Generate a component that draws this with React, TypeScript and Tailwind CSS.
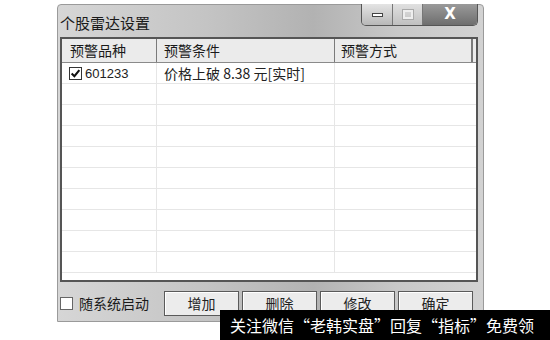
import React from "react";

const cjk = { fontFamily: '"Noto Sans CJK SC", "Noto Sans", sans-serif' };

function Row({ code, cond }: { code?: string; cond?: string }) {
    return (
        <div className="grid grid-cols-[95px_178px_1fr] h-[21px] border-b border-[#e6e6e6] shrink-0">
            <div className="border-r border-[#e6e6e6] flex items-center pl-[7px] gap-[3px]">
                {code && (
                    <>
                        <span className="w-[13px] h-[13px] border border-[#333] bg-white flex items-center justify-center">
                            <svg width="11" height="11" viewBox="0 0 10 10">
                                <path d="M1.5 5 L4 7.5 L8.5 2" fill="none" stroke="#111" strokeWidth="1.9" />
                            </svg>
                        </span>
                        <span className="text-[13px] text-[#222]" style={{ fontFamily: '"Liberation Sans", sans-serif' }}>{code}</span>
                    </>
                )}
            </div>
            <div className="border-r border-[#e6e6e6] flex items-center pl-[7px] text-[14px] text-[#222] whitespace-nowrap" style={cjk}>
                {cond}
            </div>
            <div />
        </div>
    );
}

function Btn({ label }: { label: string }) {
    return (
        <div className="w-[75px] h-[25px] border border-[#5a5a5a] bg-[#ececec] flex items-center justify-center text-[14px] text-[#222] shadow-[inset_1px_1px_0_#fff]" style={cjk}>
            {label}
        </div>
    );
}

export default function App() {
    const empty = Array.from({ length: 9 });
    return (
        <div className="relative w-[550px] h-[340px] bg-white overflow-hidden">
            <div className="ml-[57px] mt-[4px] w-[427px] h-[318px] flex flex-col rounded-t-[4px] border border-[#9a9a9a] bg-[linear-gradient(90deg,#d6d6d6_0%,#c4c4c4_35%,#b2b2b2_60%,#c8c8c8_80%,#d2d2d2_100%)]">
                {/* title bar */}
                <div className="h-[32px] flex justify-between shrink-0">
                    <div className="pl-[2px] pt-[10px] text-[15px] text-[#1a1a1a] leading-none" style={cjk}>个股雷达设置</div>
                    <div className="flex h-[22px] mr-[5px] -mt-[1px] border border-[#555] border-t-0 rounded-b-[5px] overflow-hidden">
                        <div className="w-[31px] bg-[linear-gradient(#e4e4e4,#b8b8b8)] border-r border-[#777] flex items-center justify-center">
                            <span className="w-[11px] h-[4px] bg-white border border-[#444]" />
                        </div>
                        <div className="w-[30px] bg-[linear-gradient(#e0e0e0,#c0c0c0)] border-r border-[#777] flex items-center justify-center">
                            <span className="w-[10px] h-[9px] border-2 border-[#eee] outline outline-1 outline-[#aaa]" />
                        </div>
                        <div className="w-[54px] bg-[linear-gradient(#9a9a9a,#6e6e6e)] flex items-center justify-center text-white text-[15px] font-bold" style={{ fontFamily: '"DejaVu Sans", sans-serif' }}>
                            X
                        </div>
                    </div>
                </div>
                {/* list */}
                <div className="ml-[2px] mr-[5px] h-[245px] border-2 border-[#555] bg-white flex flex-col overflow-hidden shrink-0">
                    <div className="grid grid-cols-[95px_178px_1fr] h-[24px] bg-[#ebebeb] border-b border-[#8a8a8a] shrink-0 text-[14px] text-[#1a1a1a]" style={cjk}>
                        <div className="border-r border-[#7a7a7a] pl-[8px] flex items-center">预警品种</div>
                        <div className="border-r border-[#7a7a7a] pl-[7px] flex items-center">预警条件</div>
                        <div className="border-r-2 border-[#7a7a7a] pl-[6px] flex items-center mr-[3px]">预警方式</div>
                    </div>
                    <Row code="601233" cond="价格上破 8.38 元[实时]" />
                    {empty.map((_, i) => (
                        <Row key={i} />
                    ))}
                </div>
                {/* bottom bar */}
                <div className="flex items-center mt-[9px] ml-[2px]">
                    <div className="flex items-center gap-[6px] w-[104px]">
                        <span className="w-[13px] h-[13px] border border-[#666] bg-white" />
                        <span className="text-[14px] text-[#1a1a1a]" style={cjk}>随系统启动</span>
                    </div>
                    <div className="flex gap-[3px]">
                        <Btn label="增加" />
                        <Btn label="删除" />
                        <Btn label="修改" />
                        <Btn label="确定" />
                    </div>
                </div>
            </div>
            {/* watermark */}
            <div className="absolute left-[220px] top-[310px] w-[330px] h-[30px] bg-black flex items-center pl-[10px] text-[16px] text-white whitespace-nowrap" style={cjk}>
                关注微信“老韩实盘”回复“指标”免费领
            </div>
        </div>
    );
}
